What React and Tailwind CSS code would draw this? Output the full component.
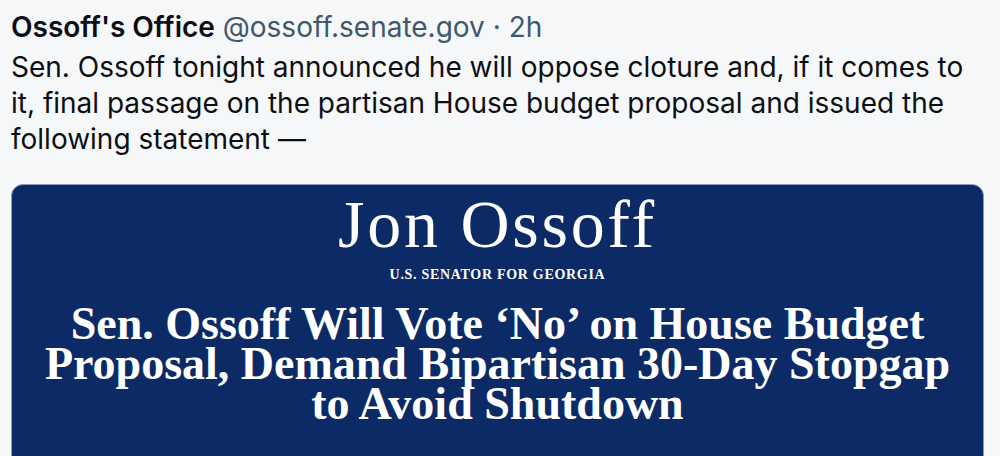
export default function App() {
  const sans = { fontFamily: 'Inter, "Noto Sans", sans-serif' };
  const serif = { fontFamily: '"Liberation Serif", "DejaVu Serif", serif' };
  return (
    <div className="w-[1000px] h-[456px] overflow-hidden bg-[#f6f7f9] text-[#0b0f14]" style={sans}>
      <div className="pl-[11px] pr-[16px] pt-[9px]">
        <div className="text-[28px] leading-[36px] whitespace-nowrap">
          <span className="font-semibold">Ossoff's Office</span>{' '}
          <span className="text-[#42576c]">@ossoff.senate.gov · 2h</span>
        </div>
        <p className="text-[28px] leading-[36px] mt-[4px]">
          Sen. Ossoff tonight announced he will oppose cloture and, if it comes to it, final passage on the partisan House budget proposal and issued the following statement —
        </p>
        <div className="mt-[27px] w-[973px] h-[320px] rounded-[12px] border border-[#8d9bb3] bg-[#0c2a66] text-white flex flex-col items-center pt-[5px]" style={serif}>
          <div className="text-[68px] leading-[68px] tracking-[0.04em]">Jon Ossoff</div>
          <div className="text-[14px] leading-[16px] font-bold tracking-[0.05em] mt-[9px]">U.S. SENATOR FOR GEORGIA</div>
          <div className="mt-[21px] text-[46px] leading-[40px] font-bold text-center">
            Sen. Ossoff Will Vote ‘No’ on House Budget
            <br />
            Proposal, Demand Bipartisan 30-Day Stopgap
            <br />
            to Avoid Shutdown
          </div>
        </div>
      </div>
    </div>
  );
}
